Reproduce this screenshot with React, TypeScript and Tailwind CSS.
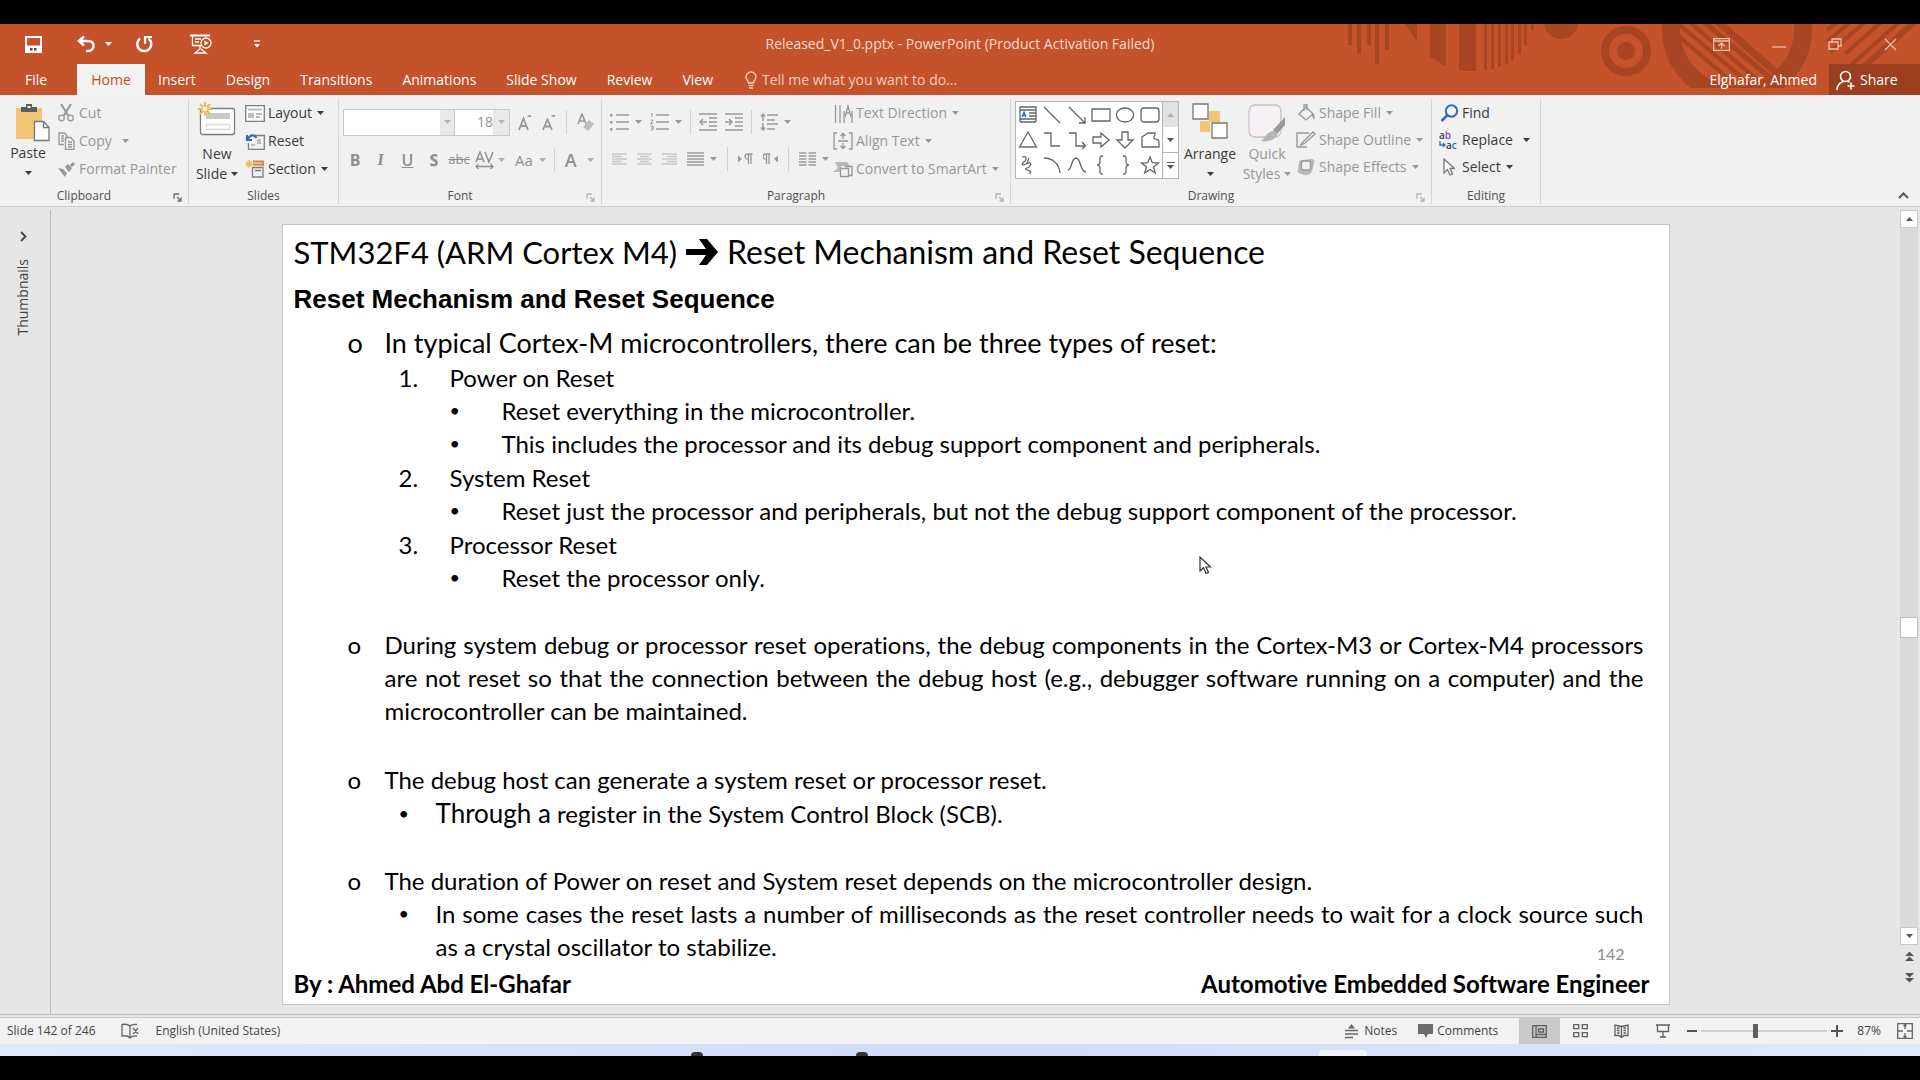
import type { ReactNode } from "react";

type IconProps = { w: number; h: number; className?: string; children: ReactNode };

function Icon({ w, h, className = "", children }: IconProps) {
  return (
    <svg
      width={w}
      height={h}
      viewBox={`0 0 ${w} ${h}`}
      fill="none"
      stroke="currentColor"
      strokeWidth="1.3"
      className={`shrink-0 ${className}`}
      aria-hidden="true"
    >
      {children}
    </svg>
  );
}

function Caret({ className = "" }: { className?: string }) {
  return (
    <Icon w={7} h={4} className={className}>
      <path d="M0 0h7L3.5 4z" fill="currentColor" stroke="none" />
    </Icon>
  );
}

function Launcher({ className = "" }: { className?: string }) {
  return (
    <button type="button" aria-label="More options" className={`absolute right-1.5 bottom-0.5 ${className}`}>
      <Icon w={9} h={9}>
        <path d="M1 6V1h5" />
        <path d="M4 4l4 4M8 4.5V8H4.500" />
      </Icon>
    </button>
  );
}

type GroupProps = { label: string; className?: string; launcher?: string; children: ReactNode };

function Group({ label, className = "", launcher, children }: GroupProps) {
  return (
    <section aria-label={label} className="relative mt-1 mb-0.5 flex shrink-0 flex-col border-r border-[#d5d5d5]">
      <div className={`flex h-[84px] items-start ${className}`}>{children}</div>
      <div className={`mt-[5px] text-center text-xs leading-4 text-[#505050] ${launcher ? "pr-5" : ""}`}>{label}</div>
      {launcher && <Launcher className={launcher} />}
    </section>
  );
}

type RowProps = { icon: ReactNode; label: string; caret?: boolean; wide?: boolean; off?: boolean; tall?: boolean };

function Row({ icon, label, caret, wide, off, tall }: RowProps) {
  return (
    <button
      type="button"
      className={`flex items-center text-left text-sm whitespace-nowrap ${tall ? "h-7" : "h-[27px]"} ${off ? "text-[#979797]" : "text-[#3b3b3b]"}`}
    >
      <span className="mr-[3px] flex w-5 justify-center">{icon}</span>
      {label}
      {caret && <Caret className={wide ? "ml-[10px]" : "ml-[5px]"} />}
    </button>
  );
}

function Divider() {
  return <span className="h-6 w-px shrink-0 bg-[#d2d2d2]" />;
}

function Tool({ label, caret, children }: { label: string; caret?: boolean; children: ReactNode }) {
  return (
    <button type="button" aria-label={label} className="flex items-center gap-1.5 text-[#9a9a9a]">
      {children}
      {caret && <Caret />}
    </button>
  );
}

function TitlePattern() {
  return (
    <svg
      width="590"
      height="71"
      viewBox="0 0 590 71"
      className="absolute top-0 right-0 text-[#a84522]"
      fill="currentColor"
      aria-hidden="true"
    >
      <path d="M18 0h4v21h-4zM27 0h4v30h-4zM37 0h4v21h-4zM45 0h4v40h-4zM55 0h4v26h-4zM75 0h12v18z" />
      <path d="M100 0h16v42l-16-9zM129 0h17v47h-12l-5-1z" />
      <path d="M154 0h3v46h-3zM161 0h3v45h-3zM168 0h3v43h-3zM175 0h3v40h-3zM181 0h3v36h-3zM188 0h3v30h-3zM194 0h3v21h-3zM201 0h3v6h-3z" />
      <circle cx="231" cy="-2" r="17" />
      <circle cx="296" cy="27" r="21" fill="none" stroke="currentColor" strokeWidth="8" />
      <circle cx="296" cy="27" r="9" />
      <clipPath id="ringBand">
        <rect x="320" y="0" width="180" height="64" />
      </clipPath>
      <clipPath id="ringInside">
        <circle cx="407" cy="5" r="60" />
      </clipPath>
      <g clipPath="url(#ringBand)">
        <circle cx="407" cy="5" r="66" fill="none" stroke="currentColor" strokeWidth="18" />
        <g clipPath="url(#ringInside)" stroke="currentColor" strokeWidth="4">
          <path d="M340 5l80 68M340 -7l88 74M345 -14l90 76" />
          <path d="M355 -18l90 76" strokeWidth="5" />
          <path d="M372 -16l76 66" strokeWidth="7" />
        </g>
      </g>
      <g stroke="currentColor" strokeWidth="4">
        <path d="M497 6l10-8M497 18l28-24M500 28l42-36M515 30l43-38M520 42l56-50" />
        <path d="M528 48l70-62" strokeWidth="6" />
      </g>
    </svg>
  );
}

const tabs = ["Insert", "Design", "Transitions", "Animations", "Slide Show", "Review", "View"];

function Header() {
  return (
    <header className="relative bg-[#c4522a] text-white">
      <TitlePattern />
      <div className="relative grid h-10 grid-cols-[1fr_auto_1fr] items-center">
        <div className="flex items-center pl-[25px]">
          <button type="button" aria-label="Save">
            <Icon w={17} h={17}>
              <path d="M1 1h15v15H1z" strokeWidth="2" />
              <path d="M2 9.500h13V16H2z" fill="#fff" stroke="none" />
              <path d="M5 12h2.500v2.500H5zM9 12h2.500v2.500H9z" fill="#9a2a10" stroke="none" />
            </Icon>
          </button>
          <button type="button" aria-label="Undo" className="ml-[35px] flex items-center gap-2.5">
            <Icon w={18} h={18}>
              <path d="M7 1.500L2 6l5 4.500M2.500 6H11c3.500 0 5.500 2 5.500 4.800S14.500 16 11 16H9" strokeWidth="2.500" />
            </Icon>
            <Caret />
          </button>
          <button type="button" aria-label="Repeat" className="ml-[23px]">
            <Icon w={18} h={18}>
              <path d="M5 3.500a7 7 0 1 0 8.500 0" strokeWidth="2.500" />
              <path d="M10 9V2h7" strokeWidth="2.200" />
            </Icon>
          </button>
          <button type="button" aria-label="Start from beginning" className="ml-[37px]">
            <Icon w={22} h={20}>
              <path d="M0 1.500h20" strokeWidth="2" />
              <path d="M2.500 2v9.500h9M10 12v3l-5 4h11l-5-4M5 5h6M5 8h4" />
              <circle cx="16" cy="9" r="5" />
              <path d="M14.500 6.500v5l4-2.500z" fill="#fff" stroke="none" />
            </Icon>
          </button>
          <button type="button" aria-label="Customize toolbar" className="ml-[42px]">
            <Icon w={6} h={8}>
              <path d="M0 1h6" />
              <path d="M0 4h6L3 7.500z" fill="currentColor" stroke="none" />
            </Icon>
          </button>
        </div>
        <h1 className="text-sm text-[#f6dcd0]">Released_V1_0.pptx - PowerPoint (Product Activation Failed)</h1>
        <div className="flex items-center justify-end gap-[42px] pr-[23px] text-[#eebfac]">
          <button type="button" aria-label="Ribbon display options">
            <Icon w={17} h={13}>
              <path d="M.600.600h15.800v11.800H.600zM.600 3h16M8.500 11V5M5.500 8l3-3 3 3" />
            </Icon>
          </button>
          <button type="button" aria-label="Minimize">
            <Icon w={14} h={14}>
              <path d="M0 10h14" />
            </Icon>
          </button>
          <button type="button" aria-label="Restore">
            <Icon w={14} h={14}>
              <path d="M1 5h9v7H1zM4 5V2h9v7h-3" />
            </Icon>
          </button>
          <button type="button" aria-label="Close">
            <Icon w={13} h={13}>
              <path d="M1 1l11 11M12 1L1 12" />
            </Icon>
          </button>
        </div>
      </div>
      <nav className="relative flex h-[31px] items-stretch text-sm" aria-label="Ribbon tabs">
        <button type="button" className="w-[77px] pr-[5px]">
          File
        </button>
        <button type="button" className="w-[68px] bg-[#f3f2f2] text-[#cb4a24]">
          Home
        </button>
        <div className="-ml-0.5 flex items-stretch">
          {tabs.map((t) => (
            <button type="button" key={t} className="px-[15px]">
              {t}
            </button>
          ))}
        </div>
        <label className="ml-4 flex items-center gap-1 text-[#f3cdbd]">
          <Icon w={14} h={18}>
            <path d="M4.500 12c0-2.500-2.500-3.500-2.500-6a5 5 0 0 1 10 0c0 2.500-2.500 3.500-2.500 6zM4.500 14.500h5M5 17h4" />
          </Icon>
          <input
            type="text"
            placeholder="Tell me what you want to do..."
            className="w-56 bg-transparent outline-none placeholder:text-[#f3cdbd]"
          />
        </label>
        <div className="ml-auto flex items-stretch">
          <button type="button" className="px-3">
            Elghafar, Ahmed
          </button>
          <button type="button" className="flex w-[91px] items-center gap-1 bg-[#9c3f20] pl-[7px]">
            <Icon w={20} h={20}>
              <circle cx="9.500" cy="6.500" r="5" strokeWidth="1.600" />
              <path d="M1 20c0-4.500 2.500-7 6-8.500M12 11.500l1.500.800M15 12.500v7M11.500 16h7" strokeWidth="1.600" />
            </Icon>
            Share
          </button>
        </div>
      </nav>
    </header>
  );
}

function ClipboardGroup() {
  return (
    <Group label="Clipboard" className="w-[188px]" launcher="text-[#6b6b6b]">
      <button type="button" className="flex w-14 flex-col items-center pt-1 text-sm leading-5 text-[#3b3b3b]">
        <Icon w={35} h={39} className="ml-2">
          <path d="M1 5h26v31H1z" fill="#f3c376" stroke="none" />
          <path d="M6 4h5V1h6v3h5v5H6z" fill="#5c5c5c" stroke="none" />
          <path d="M12.500 3h3v2h-3z" fill="#f0f0f0" stroke="none" />
          <path d="M19.500 18.500h9l5.500 6v13H19.500z" fill="#fff" stroke="#6f7784" />
          <path d="M28.500 18.500v6H34" stroke="#6f7784" />
        </Icon>
        <span className="mt-px">Paste</span>
        <Caret className="mt-2" />
      </button>
      <div className="flex flex-col">
        <Row
          off
          tall
          label="Cut"
          icon={
            <Icon w={16} h={18}>
              <path d="M3 0l7.500 12M13 0L5.500 12" strokeWidth="2" />
              <circle cx="3.500" cy="14" r="2.800" />
              <circle cx="12.500" cy="14" r="2.800" />
            </Icon>
          }
        />
        <Row
          off
          tall
          caret
          wide
          label="Copy"
          icon={
            <Icon w={17} h={18}>
              <path d="M6 12.500H1V1h5.500L9 3.500V5M3 4h3M3 6.500h3M3 9h3" />
              <path d="M7.500 5.500h5L16 9v8.500H7.500zM10 10h4M10 12.500h4M10 15h4" />
            </Icon>
          }
        />
        <Row
          off
          tall
          label="Format Painter"
          icon={
            <Icon w={17} h={15}>
              <path d="M0 6l5 1 4 4-2 4zM7 5l3-3 4 4-3 4zM12 3l3-3 2 2-3 3z" fill="currentColor" stroke="none" />
            </Icon>
          }
        />
      </div>
    </Group>
  );
}

function SlidesGroup() {
  return (
    <Group label="Slides" className="w-[149px]">
      <button type="button" className="flex w-[56px] flex-col items-center pt-[3px] text-sm leading-5 text-[#3b3b3b]">
        <Icon w={38} h={36}>
          <rect x="2.500" y="6.500" width="34" height="26" rx="2" fill="#fff" stroke="#7d7d7d" />
          <path d="M8 11h24v6H8z" fill="#c9c9c9" stroke="none" />
          <path d="M8.500 22.500h23v5h-23z" stroke="#dadada" />
          <path d="M7 0v14M0 7h14M2 2l10 10M12 2L2 12" stroke="#f0b95c" strokeWidth="1.800" />
          <circle cx="7" cy="7" r="3" fill="#fff4dd" stroke="#f0b95c" />
        </Icon>
        <span className="mt-1.5">New</span>
        <span className="flex items-center gap-1">
          Slide <Caret />
        </span>
      </button>
      <div className="flex flex-col">
        <Row
          tall
          caret
          label="Layout"
          icon={
            <Icon w={20} h={17} className="text-[#7d7d7d]">
              <path d="M.700.700h18.600v15.600H.700z" fill="#fff" />
              <path d="M3 3.500h14v2H3zM3 8h6v5H3zM11 8h6v2h-6zM11 11h4v2h-4z" fill="#bcbcbc" stroke="none" />
            </Icon>
          }
        />
        <Row
          tall
          label="Reset"
          icon={
            <Icon w={20} h={17} className="text-[#7d7d7d]">
              <path d="M10 2.500h9.300v14H3.500V10" />
              <path d="M12 6h4v5h-4zM6 11h4v2H6z" fill="#bcbcbc" stroke="none" />
              <path d="M2 2v5h5M2.500 6.500C5 1.500 9 1 11.500 5" stroke="#2e6db5" strokeWidth="2.200" />
            </Icon>
          }
        />
        <Row
          tall
          caret
          label="Section"
          icon={
            <Icon w={20} h={18}>
              <path d="M8 1.500h10V6M8 4.500h10" stroke="#e0803a" strokeWidth="1.800" />
              <path d="M7.500 7.500h10.500v9.500H7.500zM10 10.500h6" stroke="#7d7d7d" />
              <path d="M4 0v8M0 4h8M1.200 1.200l5.600 5.600M6.800 1.200L1.200 6.800" stroke="#f0b95c" />
            </Icon>
          }
        />
      </div>
    </Group>
  );
}

function FontGroup() {
  return (
    <Group label="Font" className="w-[262px] flex-col pl-1" launcher="text-[#b5b5b5]">
      <div className="flex h-[46px] items-center">
        <label className="flex h-[27px] items-stretch border border-[#c9c9c9] bg-white">
          <input type="text" aria-label="Font name" className="w-24 bg-transparent outline-none" />
          <span className="flex w-3.5 items-center justify-center bg-[#e9e9e9] text-[#b5b5b5]">
            <Caret />
          </span>
        </label>
        <label className="flex h-[27px] items-stretch border border-l-0 border-[#c9c9c9] bg-white">
          <input
            type="text"
            aria-label="Font size"
            defaultValue="18"
            className="w-[38px] bg-transparent text-right text-sm text-[#979797] outline-none"
          />
          <span className="flex w-4 items-center justify-center bg-[#e9e9e9] text-[#b5b5b5]">
            <Caret />
          </span>
        </label>
        <div className="flex items-center gap-2.5 pl-2">
          <Tool label="Increase font size">
            <Icon w={14} h={17}>
              <path d="M1 16L5.500 4.500 10 16M2.500 12h6" strokeWidth="1.800" />
              <path d="M9 3l2.500-2.500L14 3z" fill="currentColor" stroke="none" />
            </Icon>
          </Tool>
          <Tool label="Decrease font size">
            <Icon w={14} h={17}>
              <path d="M1 16L5.500 5.500 10 16M2.500 12.500h6" strokeWidth="1.800" />
              <path d="M9 1h5l-2.500 2.500z" fill="currentColor" stroke="none" />
            </Icon>
          </Tool>
          <Divider />
          <Tool label="Clear formatting">
            <Icon w={17} h={18}>
              <path d="M1 11L5 1l4 10M2.500 8h5" strokeWidth="1.600" />
              <path d="M12 7l5 4-6 7-5-4z" fill="#bdbdbd" stroke="none" />
            </Icon>
          </Tool>
        </div>
      </div>
      <div className="flex h-[30px] items-center text-base text-[#8f8f8f]">
        <button type="button" className="w-6 font-bold">B</button>
        <button type="button" className="w-[27px] font-serif font-bold italic">I</button>
        <button type="button" className="w-[27px] font-semibold underline">U</button>
        <button type="button" className="w-[26px] font-bold text-shadow-2xs">S</button>
        <button type="button" className="w-6 text-[13px] line-through">abc</button>
        <button type="button" aria-label="Character spacing" className="ml-1 flex items-center gap-1">
          <Icon w={19} h={18}>
            <path d="M1 11L5 1l4 10M2.500 8h5M10 1l4 10 4-10" strokeWidth="1.500" />
            <path d="M1 15.500h17M3.500 13L1 15.500 3.500 18M15.500 13l2.500 2.500-2.500 2.500" />
          </Icon>
          <Caret className="text-[#b0b0b0]" />
        </button>
        <button type="button" className="ml-2.5 flex items-center gap-1.5 text-[15px]">
          Aa <Caret className="text-[#b0b0b0]" />
        </button>
        <span className="ml-2 flex">
          <Divider />
        </span>
        <button type="button" className="ml-2.5 flex items-center gap-2.5 text-lg leading-5 font-semibold">
          A <Caret className="text-[#b0b0b0]" />
        </button>
      </div>
    </Group>
  );
}

function Lines({ d, w = 16, h = 16 }: { d: string; w?: number; h?: number }) {
  return (
    <Icon w={w} h={h}>
      <path d={d} strokeWidth="1.500" />
    </Icon>
  );
}

function ParagraphGroup() {
  return (
    <Group label="Paragraph" className="w-[408px] pl-2" launcher="text-[#b5b5b5]">
      <div className="flex w-[223px] flex-col">
        <div className="flex h-[46px] items-center gap-2">
          <Tool label="Bullets" caret>
            <Icon w={19} h={18}>
              <path d="M6 2h13M6 9h13M6 16h13" />
              <path d="M0 1h2.500v2.500H0zM0 8h2.500v2.500H0zM0 15h2.500v2.500H0z" fill="currentColor" stroke="none" />
            </Icon>
          </Tool>
          <Tool label="Numbering" caret>
            <Icon w={19} h={18}>
              <path d="M6 2h13M6 9h13M6 16h13" />
              <path d="M1 .500h1V4M.500 7h2v1.500l-2 2h2.500M.500 13h2.500v4H.500M1 15h2" strokeWidth="1" />
            </Icon>
          </Tool>
          <Divider />
          <Tool label="Decrease indent">
            <Lines w={18} h={18} d="M0 1h18M10 5h8M10 9h8M10 13h8M0 17h18M1 9h7M4 6L1 9l3 3" />
          </Tool>
          <Tool label="Increase indent">
            <Lines w={18} h={18} d="M0 1h18M10 5h8M10 9h8M10 13h8M0 17h18M0 9h7M4 6l3 3-3 3" />
          </Tool>
          <Divider />
          <Tool label="Line spacing" caret>
            <Lines w={18} h={18} d="M7 2h11M7 7h8M7 11h11M7 16h8M3 1v7M1 3.500L3 1l2 2.500M3 10v7M1 14.500L3 17l2-2.500" />
          </Tool>
        </div>
        <div className="flex h-7 items-center gap-2.5 pl-0.5 text-[#c9c9c9]">
          <button type="button" aria-label="Align left">
            <Lines w={15} h={12} d="M0 1h15M0 3.500h10M0 6h15M0 8.500h10M0 11h15" />
          </button>
          <button type="button" aria-label="Center">
            <Lines w={15} h={12} d="M0 1h15M3 3.500h9M0 6h15M3 8.500h9M0 11h15" />
          </button>
          <button type="button" aria-label="Align right">
            <Lines w={15} h={12} d="M0 1h15M5 3.500h10M0 6h15M5 8.500h10M0 11h15" />
          </button>
          <Tool label="Justify" caret>
            <Lines w={17} h={14} d="M0 1h17M0 4h17M0 7h17M0 10h17M0 13h17" />
          </Tool>
          <Divider />
          <Tool label="Left to right">
            <Icon w={15} h={12}>
              <path d="M0 2.500L4 6 0 9.500z" fill="currentColor" stroke="none" />
              <path d="M14.500 1H9.500a2.500 2.500 0 0 0 0 5M10.500 1v10M13 1v10" />
            </Icon>
          </Tool>
          <Tool label="Right to left">
            <Icon w={15} h={12}>
              <path d="M15 2.500L11 6l4 3.500z" fill="currentColor" stroke="none" />
              <path d="M7.500 1h-5a2.500 2.500 0 0 0 0 5M3.500 1v10M6 1v10" />
            </Icon>
          </Tool>
          <Divider />
          <Tool label="Columns" caret>
            <Lines w={17} h={14} d="M0 1h7.500M0 4h7.500M0 7h7.500M0 10h7.500M0 13h7.500M9.500 1H17M9.500 4H17M9.500 7H17M9.500 10H17M9.500 13H17" />
          </Tool>
        </div>
      </div>
      <div className="flex flex-col">
        <Row
          off
          tall
          caret
          label="Text Direction"
          icon={
            <Icon w={19} h={19}>
              <path d="M1.500 1v18M6 1v18M10 19V7M18 19V7" />
              <path d="M11 13l3-11 3 11M12 9h4" />
            </Icon>
          }
        />
        <Row
          off
          tall
          caret
          label="Align Text"
          icon={
            <Icon w={20} h={18}>
              <path d="M4 1H1v16h3M16 1h3v16h-3M5 9h10M10 1v6M10 11v6M7.500 4L10 1.500 12.500 4M7.500 14l2.500 2.500 2.500-2.500" />
            </Icon>
          }
        />
        <Row
          off
          tall
          caret
          label="Convert to SmartArt"
          icon={
            <Icon w={20} h={17}>
              <path d="M2 1h12l3 4H8v6H0l5-4z" fill="#b9b9b9" stroke="none" />
              <path d="M7.500 7.500h8v8h-8z" fill="#f1f1f1" />
              <path d="M12 5.500h7v9h-3" />
            </Icon>
          }
        />
      </div>
    </Group>
  );
}

const shapes = [
  "M3 3h16v3H3zM12 9h7M12 12h7M3 15h16M3 18h16M3 3v15M19 3v15",
  "M3 3l16 16",
  "M3 3l16 16M19 13v6h-6",
  "M2 5h18v12H2z",
  "M11 4c5 0 8.500 3 8.500 7s-3.500 7-8.500 7-8.500-3-8.500-7S6 4 11 4z",
  "M5 4h12c2 0 3 1 3 3v8c0 2-1 3-3 3H5c-2 0-3-1-3-3V7c0-2 1-3 3-3z",
  "M11 3l8.500 15h-17z",
  "M3 4h7v13h9",
  "M3 4h7v13h9M16 13l3.500 4-3.500 3",
  "M3 8h8V4l8 7-8 7v-4H3z",
  "M8 3v8H3l8 8 8-8h-5V3z",
  "M3 18V8l6-4h7c0 4-3 5 0 6s4 0 4 3v5z",
  "M5 3c5-2 5 3 2 5s-2 4 2 2 6-1 4 2-7 2-3 4 4 0 3 4M12 4l-2 5",
  "M3 4c8 0 15 5 16 15",
  "M2 16C6 16 5 4 10 4s4 14 10 14",
  "M13 2c-4 0-3 2-3 5s-1 4-3 4c2 0 3 1 3 4s-1 5 3 5",
  "M9 2c4 0 3 2 3 5s1 4 3 4c-2 0-3 1-3 4s1 5-3 5",
  "M11 3l2.300 5.700 6.200.300-5 4 1.800 6L11 15.500 5.700 19l1.800-6-5-4 6.200-.300z",
];

function DrawingGroup() {
  return (
    <Group label="Drawing" className="w-[420px] pl-1" launcher="text-[#b5b5b5]">
      <div className="mt-[2px] flex h-[78px] border border-[#b5b5b5] bg-white">
        <div className="grid w-[146px] grid-cols-6 place-items-center text-[#666]">
          {shapes.map((d, i) => (
            <button type="button" key={d} aria-label={`Shape ${i + 1}`}>
              <Icon w={22} h={22}>
                <path d={d} />
                {i === 0 && <path d="M5 13l2-5 2 5M6 11.500h2.500" stroke="#2e6db5" />}
              </Icon>
            </button>
          ))}
        </div>
        <div className="flex w-4 flex-col border-l border-[#b5b5b5] text-[#555]">
          <button type="button" aria-label="Scroll shapes up" className="flex flex-1 items-center justify-center bg-[#e2e2e2]">
            <Caret className="rotate-180 text-[#b0b0b0]" />
          </button>
          <button type="button" aria-label="Scroll shapes down" className="flex flex-1 items-center justify-center">
            <Caret />
          </button>
          <button
            type="button"
            aria-label="All shapes"
            className="flex flex-1 flex-col items-center justify-center gap-0.5 border-t border-[#b5b5b5]"
          >
            <span className="h-px w-2 bg-[#555]" />
            <Caret />
          </button>
        </div>
      </div>
      <button type="button" className="ml-1 flex w-[54px] flex-col items-center pt-1 text-sm leading-5 text-[#3b3b3b]">
        <Icon w={36} h={36}>
          <path d="M17 8h11v11H17zM8 18h10v11H8z" fill="#f3c376" stroke="none" />
          <path d="M1 1h15v15H1zM20 20h15v15H20z" fill="#fff" stroke="#777" />
        </Icon>
        <span className="mt-[5px]">Arrange</span>
        <Caret className="mt-2" />
      </button>
      <button type="button" className="ml-1 flex w-[52px] flex-col items-center pt-1 text-sm leading-5 text-[#979797]">
        <Icon w={38} h={40}>
          <rect x="1" y="2" width="32" height="32" rx="6" fill="#f6eff3" stroke="#c8c0c8" />
          <path d="M37 14v8l-8 9-4-4z" fill="#9a9a9a" stroke="none" />
          <path d="M25 28c4 0 6 3 3 6-4 4-10 5-16 4 6-2 5-9 13-10z" fill="#b5b5b5" stroke="none" />
        </Icon>
        <span className="mt-px">Quick</span>
        <span className="flex items-center gap-1">
          Styles <Caret />
        </span>
      </button>
      <div className="ml-[3px] flex flex-col">
        <Row
          off
          caret
          label="Shape Fill"
          icon={
            <Icon w={18} h={18}>
              <path d="M9 3l7 7-7 6-7-6zM7 7V1h3v5" />
              <path d="M15 9c3 1 3 4 2 7l-2-4z" fill="currentColor" stroke="none" />
            </Icon>
          }
        />
        <Row
          off
          caret
          label="Shape Outline"
          icon={
            <Icon w={20} h={18}>
              <path d="M13 2H1v14h10M6 12L17 1l2 2L9 12l-4 2z" />
            </Icon>
          }
        />
        <Row
          off
          caret
          label="Shape Effects"
          icon={
            <Icon w={18} h={18}>
              <path d="M5 2l9-1c3 0 4 2 3 5l-2 7c-1 3-3 4-6 4l-5-1c-3-1-4-3-3-5l1-6c0-2 1-3 3-3z" fill="#b8b8b8" stroke="none" />
              <rect x="4.500" y="3" width="9" height="9" rx="2" fill="#f1f1f1" stroke="#999" />
            </Icon>
          }
        />
      </div>
    </Group>
  );
}

function EditingGroup() {
  return (
    <Group label="Editing" className="w-[108px] flex-col pl-[7px]">
      <Row
        label="Find"
        icon={
          <Icon w={19} h={18} className="text-[#2e6db5]">
            <circle cx="11.500" cy="7" r="5.700" strokeWidth="2" />
            <path d="M7.500 11L1.500 17" strokeWidth="2.500" />
          </Icon>
        }
      />
      <Row
        label="Replace"
        caret
        wide
        icon={
          <span className="flex w-5 flex-col text-[10px] leading-[10px] font-semibold">
            <span>
              a<span className="text-[#8a4bb8]">b</span>
            </span>
            <span className="flex items-center">
              <Icon w={7} h={7} className="text-[#2e6db5]">
                <path d="M1 0v4h5M4 2l2 2-2 2" />
              </Icon>
              a<span className="text-[#2e6db5]">c</span>
            </span>
          </span>
        }
      />
      <Row
        label="Select"
        caret
        icon={
          <Icon w={12} h={18} className="text-[#777]">
            <path d="M1 1v14l3.500-3.500L7 17l2.500-1-2.500-5.500h4.500z" fill="#fff" />
          </Icon>
        }
      />
    </Group>
  );
}

function Ribbon() {
  return (
    <div className="flex border-b border-[#cfcfcf] bg-[#f1f1f1]">
      <ClipboardGroup />
      <SlidesGroup />
      <FontGroup />
      <ParagraphGroup />
      <DrawingGroup />
      <EditingGroup />
      <button type="button" aria-label="Collapse the ribbon" className="mt-auto mr-[11px] mb-[7px] ml-auto text-[#555]">
        <Icon w={11} h={7}>
          <path d="M1 6l4.500-4.500L10 6" strokeWidth="2" />
        </Icon>
      </button>
    </div>
  );
}

type EntryProps = { mark: string; markClass: string; className?: string; children: ReactNode };

function Entry({ mark, markClass, className = "", children }: EntryProps) {
  return (
    <div className={`flex ${className}`}>
      <span className={`shrink-0 ${markClass}`}>{mark}</span>
      <p className="flex-1 text-justify">{children}</p>
    </div>
  );
}

function Slide() {
  const round = "w-[37px]";
  const number = "w-[51px]";
  const dot = "w-[52px] text-lg leading-[33px]";
  const subDot = "w-[37px] text-lg leading-[33px]";
  return (
    <article className="relative flex w-full max-w-[1388px] flex-col border border-[#c6c6c6] bg-white pt-[7px] pr-[19px] pl-[11px] font-['Lato',sans-serif] text-2xl leading-[33px] text-black [font-variant-ligatures:none]">
      <h2 className="flex items-center text-[32px] leading-10">
        <span className="text-[31px]">STM32F4 (ARM Cortex M4)</span>
        <svg width="32" height="26" viewBox="0 0 32 26" className="mx-[9px]" role="img" aria-label="leads to">
          <path d="M0 10h20L13 0h8l11 13-11 13h-8l7-10H0z" fill="#000" />
        </svg>
        Reset Mechanism and Reset Sequence
      </h2>
      <h3 className="mt-[11px] font-['Liberation_Sans',sans-serif] text-[26px] leading-8 font-bold">
        Reset Mechanism and Reset Sequence
      </h3>
      <div className="mt-2.5 pr-1.5 pl-[54px]">
        <Entry mark="o" markClass={round} className="text-[27px] leading-9">
          In typical Cortex-M microcontrollers, there can be three types of reset:
        </Entry>
        <div className="flex flex-col gap-px pl-[51px]">
          <div>
            <Entry mark="1." markClass={number}>Power on Reset</Entry>
            <div className="pl-[51px]">
              <Entry mark="•" markClass={dot}>Reset everything in the microcontroller.</Entry>
              <Entry mark="•" markClass={dot}>
                This includes the processor and its debug support component and peripherals.
              </Entry>
            </div>
          </div>
          <div>
            <Entry mark="2." markClass={number}>System Reset</Entry>
            <div className="pl-[51px]">
              <Entry mark="•" markClass={dot}>
                Reset just the processor and peripherals, but not the debug support component of the processor.
              </Entry>
            </div>
          </div>
          <div>
            <Entry mark="3." markClass={number}>Processor Reset</Entry>
            <div className="pl-[51px]">
              <Entry mark="•" markClass={dot}>Reset the processor only.</Entry>
            </div>
          </div>
        </div>
        <Entry mark="o" markClass={round} className="mt-[34px]">
          During system debug or processor reset operations, the debug components in the Cortex-M3 or Cortex-M4
          processors are not reset so that the connection between the debug host (e.g., debugger software running on a
          computer) and the microcontroller can be maintained.
        </Entry>
        <Entry mark="o" markClass={round} className="mt-9">
          The debug host can generate a system reset or processor reset.
        </Entry>
        <Entry mark="•" markClass={subDot} className="mt-px pl-[51px]">
          <span className="text-[26px]">Through a</span> register in the System Control Block (SCB).
        </Entry>
        <Entry mark="o" markClass={round} className="mt-[34px]">
          The duration of Power on reset and System reset depends on the microcontroller design.
        </Entry>
        <Entry mark="•" markClass={subDot} className="pl-[51px]">
          In some cases the reset lasts a number of milliseconds as the reset controller needs to wait for a clock source
          such as a crystal oscillator to stabilize.
        </Entry>
      </div>
      <span className="absolute right-11 bottom-10 text-base leading-5 text-[#8c8c8c]">142</span>
      <footer className="mt-1 flex justify-between font-bold">
        <span>By : Ahmed Abd El-Ghafar</span>
        <span>Automotive Embedded Software Engineer</span>
      </footer>
      <svg width="13" height="19" viewBox="0 0 13 19" className="absolute top-[331px] left-[916px]" aria-hidden="true">
        <path d="M1 1v14l3.500-3.500L7 17.500l2.500-1L7 11h4.500z" fill="#fff" stroke="#333" strokeWidth="1.200" />
      </svg>
    </article>
  );
}

function ScrollBar() {
  return (
    <div className="mt-[3px] mr-0.5 flex w-[18px] flex-col items-stretch bg-[#e6e6e6] text-[#555]">
      <button type="button" aria-label="Scroll up" className="flex h-[18px] items-center justify-center border border-[#c9c9c9] bg-white">
        <Caret className="rotate-180" />
      </button>
      <div className="flex flex-1 flex-col bg-[#dadada]">
        <span className="flex-[390]" />
        <span className="h-[21px] border border-[#bdbdbd] bg-white" />
        <span className="flex-[289]" />
      </div>
      <button type="button" aria-label="Scroll down" className="flex h-[18px] items-center justify-center border border-[#c9c9c9] bg-white">
        <Caret />
      </button>
      <button type="button" aria-label="Previous slide" className="flex h-[22px] items-center justify-center">
        <Icon w={9} h={10}>
          <path d="M0 5l4.500-4.500L9 5zM0 10l4.500-4.500L9 10z" fill="currentColor" stroke="none" />
        </Icon>
      </button>
      <button type="button" aria-label="Next slide" className="mb-[25px] flex h-[22px] items-center justify-center">
        <Icon w={9} h={10}>
          <path d="M0 0h9L4.500 4.500zM0 5h9L4.500 9.500z" fill="currentColor" stroke="none" />
        </Icon>
      </button>
    </div>
  );
}

function StatusBar() {
  return (
    <footer className="flex h-[27px] items-stretch border-t border-[#c9c9c9] bg-[#f2f2f2] pl-[7px] text-xs text-[#444]">
      <div className="flex items-center">
        <span>Slide 142 of 246</span>
        <button type="button" aria-label="Spelling" className="ml-[25px]">
          <Icon w={18} h={16} className="text-[#666]">
            <path d="M9 3v12M9 3C7 1 4 1 1 1.500V13c3-.500 6-.500 8 2M9 3c2-2 4-2 7-1.500M16 13c-3-.500-5 0-7 2M12 5l5 6M17 5l-5 6" />
          </Icon>
        </button>
        <button type="button" className="ml-[17px]">English (United States)</button>
      </div>
      <div className="ml-auto flex items-center">
        <button type="button" className="flex items-center gap-1.5">
          <Icon w={13} h={15} className="text-[#666]">
            <path d="M3 4.500L6.500 0 10 4.500z" fill="currentColor" stroke="none" />
            <path d="M0 6.500h13M0 10h13M0 13.500h8" />
          </Icon>
          Notes
        </button>
        <button type="button" className="ml-[21px] flex items-center gap-1">
          <Icon w={15} h={15} className="text-[#6b6b6b]">
            <path d="M0 0h15v10h-5l-2 4-2-4H0z" fill="currentColor" stroke="none" />
          </Icon>
          Comments
        </button>
        <div className="ml-[21px] flex items-stretch self-stretch text-[#5f5f5f]">
          <button type="button" aria-label="Normal view" className="flex w-[41px] items-center justify-center bg-[#c9c9c9]">
            <Icon w={15} h={13}>
              <path d="M.700.700h13.600v11.600H.700zM4 1v11M6.500 4h5v3h-5zM4 9.500h10" />
            </Icon>
          </button>
          <button type="button" aria-label="Slide sorter" className="flex w-[41px] items-center justify-center">
            <Icon w={15} h={14}>
              <path d="M.700.700h5v4h-5zM9.300.700h5v4h-5zM.700 8.700h5v4h-5zM9.300 8.700h5v4h-5z" />
            </Icon>
          </button>
          <button type="button" aria-label="Reading view" className="flex w-[41px] items-center justify-center">
            <Icon w={15} h={14}>
              <path d="M7.500 2.500v11M7.500 2.500L1 1v10.500h4l2.500 2 2.500-2h4V1L7.500 2.500M3 4h2.500M3 6.500h2.500M3 9h2.500M9.500 4H12M9.500 6.500H12M9.500 9H12" />
            </Icon>
          </button>
          <button type="button" aria-label="Slide show" className="flex w-[41px] items-center justify-center">
            <Icon w={14} h={14}>
              <path d="M0 1h14M1.500 1v6.500h11V1M7 8v5M4 13h6" />
            </Icon>
          </button>
        </div>
        <button type="button" aria-label="Zoom out" className="ml-1 text-[#555]">
          <Icon w={10} h={10}>
            <path d="M0 5h10" strokeWidth="2" />
          </Icon>
        </button>
        <input
          type="range"
          aria-label="Zoom"
          min={0}
          max={100}
          defaultValue={43}
          className="mx-1 h-4 w-[126px] appearance-none bg-transparent [&::-webkit-slider-runnable-track]:h-0.5 [&::-webkit-slider-runnable-track]:bg-[#d0d0d0] [&::-webkit-slider-thumb]:-mt-1.5 [&::-webkit-slider-thumb]:h-3.5 [&::-webkit-slider-thumb]:w-[5px] [&::-webkit-slider-thumb]:appearance-none [&::-webkit-slider-thumb]:bg-[#5f5f5f]"
        />
        <button type="button" aria-label="Zoom in" className="text-[#555]">
          <Icon w={12} h={12}>
            <path d="M0 6h12M6 0v12" strokeWidth="2" />
          </Icon>
        </button>
        <button type="button" className="ml-3.5">87%</button>
        <button type="button" aria-label="Fit slide to window" className="mr-[7px] ml-4 text-[#666]">
          <Icon w={16} h={16}>
            <path d="M.700.700h14.600v14.600H.700zM8 1v5M8 10v5M1 8h5M10 8h5M6.500 3L8 1.500 9.500 3M6.500 13L8 14.500 9.500 13" />
          </Icon>
        </button>
      </div>
    </footer>
  );
}

export default function App() {
  return (
    <div className="flex min-h-screen flex-col bg-black py-6 font-['Open_Sans',sans-serif]">
      <Header />
      <Ribbon />
      <main className="flex flex-1 items-stretch bg-[#e6e6e6]">
        <aside className="mt-[3px] flex w-[51px] flex-col items-center border-r border-[#bdbdbd] pt-[21px] pr-1 text-[#444]">
          <button type="button" aria-label="Expand thumbnails">
            <Icon w={7} h={11}>
              <path d="M1 1l4.500 4.500L1 10" strokeWidth="1.800" />
            </Icon>
          </button>
          <span className="mt-[17px] rotate-180 text-sm [writing-mode:vertical-rl]">Thumbnails</span>
        </aside>
        <div className="flex flex-1 justify-center px-4 pt-[17px] pb-[9px]">
          <Slide />
        </div>
        <ScrollBar />
      </main>
      <div className="h-[3px] border-t border-[#bdbdbd] bg-[#e6e6e6]" />
      <StatusBar />
      <div className="flex h-3 items-end bg-linear-to-r from-[#dfeafb] via-[#cfdcf8] to-[#dfeafa]">
        <span className="ml-[36%] h-1 w-3 rounded-t-full bg-[#333]" />
        <span className="ml-[153px] h-1 w-3 rounded-t-full bg-[#333]" />
        <span className="ml-[451px] h-1.5 w-12 rounded-t bg-[#eef3fd]" />
      </div>
    </div>
  );
}
